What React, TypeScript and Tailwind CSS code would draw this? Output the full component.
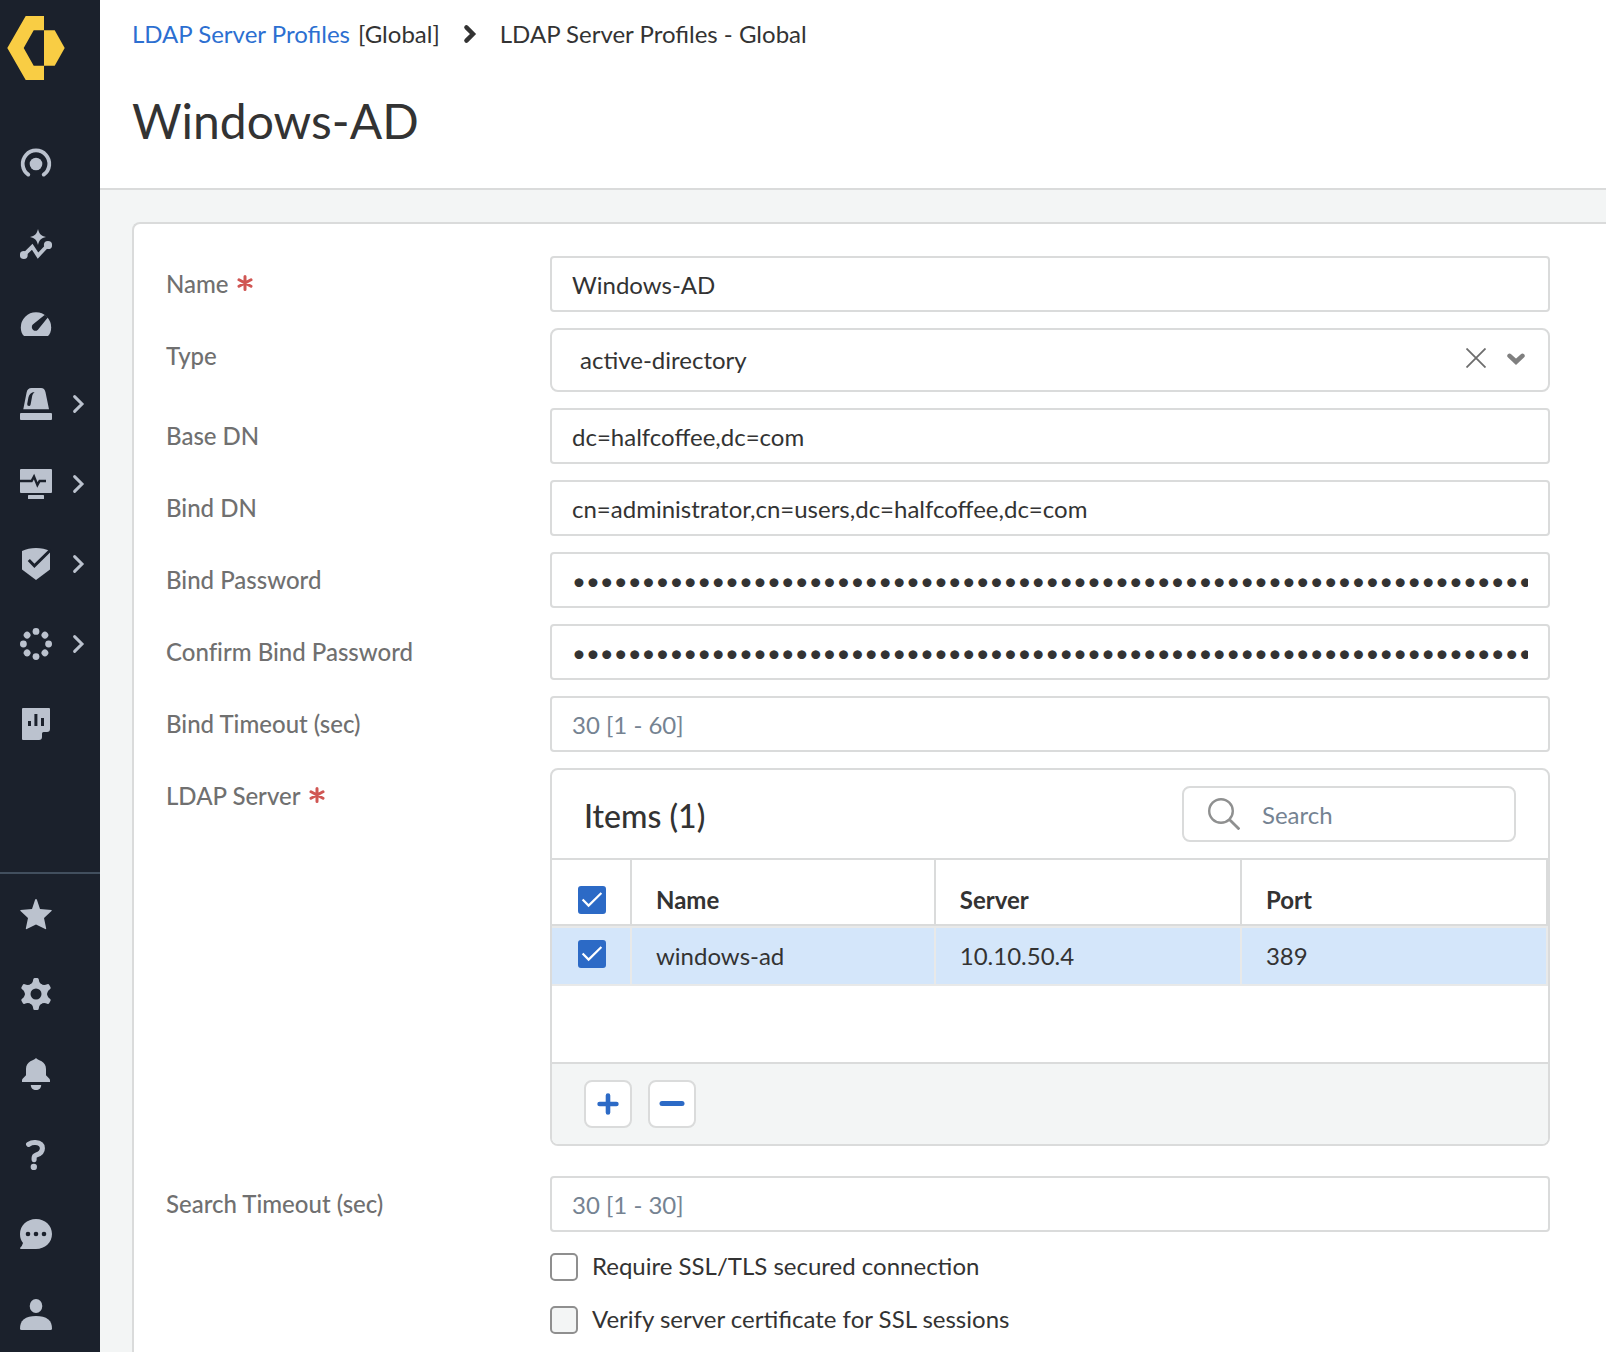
import React, { useState } from "react";
import type { ReactNode } from "react";

const DARK = "#1b212c";

function Glyph({ children }: { children: ReactNode }) {
  return (
    <svg viewBox="0 0 32 32" className="size-8 shrink-0" fill="currentColor" aria-hidden="true">
      {children}
    </svg>
  );
}

const RING = [0, 45, 90, 135, 180, 225, 270, 315];
const TEETH = [0, 60, 120, 180, 240, 300];

const topItems: { label: string; expandable?: boolean; icon: ReactNode }[] = [
  {
    label: "Command center",
    icon: (
      <>
        <circle cx="16" cy="16" r="6.3" />
        <path d="M8.3 26.6A13.3 13.3 0 1 1 23.7 26.6" fill="none" stroke="currentColor" strokeWidth="3.8" strokeLinecap="round" />
      </>
    ),
  },
  {
    label: "Insights",
    icon: (
      <>
        <path d="M18 1C19.3 6 21 7.7 26 9C21 10.3 19.3 12 18 17C16.7 12 15 10.3 10 9C15 7.7 16.7 6 18 1Z" />
        <circle cx="3.8" cy="27" r="3.9" />
        <circle cx="28" cy="17" r="4.1" />
        <path d="M3.8 27L12.2 18.8L18 27.6L28 17" fill="none" stroke="currentColor" strokeWidth="3.8" />
      </>
    ),
  },
  {
    label: "Dashboard",
    icon: (
      <>
        <path d="M4 28C2 26 .8 23 .8 19.4A15.2 15.2 0 0 1 31.2 19.4C31.2 23 30 26 28 28Z" />
        <path d="M12.8 16.6L24.6 7L27.8 9.4L18.9 20.6A3.7 3.7 0 1 1 12.8 16.6Z" fill={DARK} />
        <path d="M25.6 6.8L28.4 9.2" stroke={DARK} strokeWidth="1.4" />
      </>
    ),
  },
  {
    label: "Incidents",
    expandable: true,
    icon: (
      <>
        <path d="M3.3 21.3L6.6 4.5C7.1 1.7 8.8 0 11.5 0H21C23.4 0 25 1.5 25.5 4.2L29 21.3Z" />
        <path d="M14.6 4C11 4.4 9 6.5 8.4 9.5L7.2 16Q7 18 9 18Q10.3 18 10.6 16.5L12 9C12.4 6.5 13.3 5.3 14.6 4Z" fill={DARK} />
        <rect y="25" width="32" height="7" rx="1" />
      </>
    ),
  },
  {
    label: "Monitor",
    expandable: true,
    icon: (
      <>
        <rect y="1" width="32" height="24" rx="1" />
        <path d="M0 13H11.6L14 8.6L17.4 17L19.6 13H26" fill="none" stroke={DARK} strokeWidth="2.4" />
        <rect x="8" y="27" width="16" height="4" rx=".6" />
      </>
    ),
  },
  {
    label: "Security",
    expandable: true,
    icon: (
      <>
        <path d="M2 3C6 .9 11 0 16 0S26 .9 30 3V21.5L16 32L2 21.5Z" />
        <path d="M8.8 12L14.4 17.8L30.5 2" fill="none" stroke={DARK} strokeWidth="3" />
      </>
    ),
  },
  {
    label: "Workflows",
    expandable: true,
    icon: (
      <>
        {RING.map((a) => (
          <circle key={a} cx="16" cy="3.4" r="3.4" transform={`rotate(${a} 16 16)`} />
        ))}
      </>
    ),
  },
  {
    label: "Reports",
    icon: (
      <>
        <path d="M3 0H29Q30 0 30 1V21Q30 24 27 24H23.5Q22 24 22 25.5V29Q22 32 19 32H3Q2 32 2 31V1Q2 0 3 0Z" />
        <path d="M8 13H11V18H8ZM14.4 6H17.4V18H14.4ZM21 10H24V18H21Z" fill={DARK} />
      </>
    ),
  },
];

const bottomItems: { label: string; icon: ReactNode }[] = [
  {
    label: "Favorites",
    icon: <path d="M16 1Q16.7 1 17 2L20 11L31.5 12Q32 12.4 31.5 13L24 20L26.2 30.6Q26 31.4 25.2 31L16 26.6L6.8 31Q6 31.4 5.8 30.6L8 20L.5 13Q0 12.4 .5 12L12 11L15 2Q15.3 1 16 1Z" />,
  },
  {
    label: "Settings",
    icon: (
      <>
        <circle cx="16" cy="16" r="11" />
        {TEETH.map((a) => (
          <path key={a} d="M9.5 7.2Q13 5 13.2 1.5Q13.4 0 14.6 0H17.4Q18.6 0 18.8 1.5Q19 5 22.5 7.2L16 12Z" transform={`rotate(${a} 16 16)`} />
        ))}
        <circle cx="16" cy="16" r="5.5" fill={DARK} />
      </>
    ),
  },
  {
    label: "Notifications",
    icon: (
      <>
        <path d="M16 0C17.2 1.6 19.4 1.9 21.6 3.3C24.4 5 26 7.6 26 11V17.2L29.4 20.8Q30 21.4 30 22.4V24H2V22.4Q2 21.4 2.6 20.8L6 17.2V11C6 7.6 7.6 5 10.4 3.3C12.6 1.9 14.8 1.6 16 0Z" />
        <path d="M10.8 27H21.2C21.2 30 19 32 16 32S10.8 30 10.8 27Z" />
      </>
    ),
  },
  {
    label: "Help",
    icon: (
      <>
        <path d="M8.6 6.4C10.6 5 13 4.3 15.4 4.5C19.8 4.8 22.4 6.8 22.4 10.2C22.4 14 20.4 15.6 16.6 16.9C14.6 17.6 14.1 18.3 14.1 20V21.6" fill="none" stroke="currentColor" strokeWidth="5.1" strokeLinecap="round" />
        <circle cx="13.8" cy="29" r="3.2" />
      </>
    ),
  },
  {
    label: "Chat",
    icon: (
      <>
        <path d="M16 1C25 1 32 7.4 32 16S25 31 16 31H1Q0 31 0 30Q2.4 27.6 3 25Q0 21.4 0 16C0 7.4 7 1 16 1Z" />
        <circle cx="8" cy="16" r="2.3" fill={DARK} />
        <circle cx="16" cy="16" r="2.3" fill={DARK} />
        <circle cx="24" cy="16" r="2.3" fill={DARK} />
      </>
    ),
  },
  {
    label: "Account",
    icon: (
      <>
        <ellipse cx="16" cy="8" rx="6.3" ry="7" />
        <path d="M0 30.5C0 27 1 23.6 3.6 21.4C6.8 18.9 11 18 16 18S25.2 18.9 28.4 21.4C31 23.6 32 27 32 30.5Q32 32 30.5 32H1.5Q0 32 0 30.5Z" />
      </>
    ),
  },
];

function Sidebar() {
  return (
    <aside className="flex w-[100px] shrink-0 flex-col bg-[#1b212c] text-[#bbc2ce]">
      <a href="#home" aria-label="Home" className="mt-4 ml-[7px]">
        <svg viewBox="0 0 58 64" className="h-16 w-[58px]" fill="#f9cd44" aria-hidden="true">
          <path d="M18.7 0H37V14.3H26.7L16.7 32L26.7 49.7H37V64H18.7L.3 32Z" />
          <path d="M37 14.3H47.7L57.7 32L47.7 49.7H37Z" />
        </svg>
      </a>
      <nav aria-label="Main" className="mt-[68px] flex flex-col gap-12">
        {topItems.map((item) => (
          <button key={item.label} type="button" aria-label={item.label} className="flex items-center gap-5 pl-5">
            <Glyph>{item.icon}</Glyph>
            {item.expandable && (
              <svg viewBox="0 0 14 20" className="h-5 w-3.5" fill="none" stroke="currentColor" strokeWidth="3" strokeLinecap="round" aria-hidden="true">
                <path d="M2.6 2.6L10 10L2.6 17.4" />
              </svg>
            )}
          </button>
        ))}
      </nav>
      <nav aria-label="Utilities" className="mt-auto flex flex-col gap-12 border-t-2 border-[#424f5e] pt-6 pb-[22px]">
        {bottomItems.map((item) => (
          <button key={item.label} type="button" aria-label={item.label} className="flex items-center pl-5">
            <Glyph>{item.icon}</Glyph>
          </button>
        ))}
      </nav>
    </aside>
  );
}

const inputClass =
  "h-14 w-full rounded-[4px] border-2 border-[#dadbdb] bg-white px-5 text-[#333333] outline-none placeholder:text-[#758392] placeholder:opacity-100 focus:border-[#2c6ac6]";

function Row({ id, label, required, children }: { id: string; label: string; required?: boolean; children: ReactNode }) {
  return (
    <div className="grid grid-cols-[384px_minmax(0,1fr)] items-start">
      <label htmlFor={id} className="flex items-center gap-2 pt-3 leading-8 font-medium text-[#707070] [font-variant-ligatures:none]">
        {label}
        {required && (
          <svg viewBox="0 0 16 16" className="mb-0.5 size-4" stroke="#d05653" strokeWidth="3" strokeLinecap="round" aria-label="required">
            <path d="M8 1.5V14.5M2 4.8L14 11.2M14 4.8L2 11.2" />
          </svg>
        )}
      </label>
      {children}
    </div>
  );
}

function Check({ id, label, checked, onChange, disabled }: { id?: string; label?: string; checked: boolean; onChange: () => void; disabled?: boolean }) {
  return (
    <span className="grid size-7 shrink-0">
      <input
        id={id}
        type="checkbox"
        aria-label={label}
        checked={checked}
        onChange={onChange}
        disabled={disabled}
        className="col-start-1 row-start-1 size-7 appearance-none rounded-[5px] border-2 border-[#8f8f8f] bg-white checked:rounded-[3px] checked:border-[#2c6ac6] checked:bg-[#2c6ac6] disabled:bg-[#f3f5f5]"
      />
      {checked && (
        <svg viewBox="0 0 28 28" className="pointer-events-none col-start-1 row-start-1 size-7" fill="none" stroke="white" strokeWidth="2.2" aria-hidden="true">
          <path d="M4.6 13.4L10.6 19.6L23.4 7" />
        </svg>
      )}
    </span>
  );
}

const servers = [{ name: "windows-ad", server: "10.10.50.4", port: 389 }];
const SECRET = "x".repeat(96);

function ServerTable() {
  const [selected, setSelected] = useState(true);
  const toggle = () => setSelected((s) => !s);
  return (
    <section id="servers" className="mb-[14px] overflow-hidden rounded-[8px] border-2 border-[#dadbdb] bg-white">
      <div className="flex items-center justify-between border-b-2 border-[#dadbdb] px-8 py-4">
        <h2 className="pt-1 text-[32px] leading-10 font-medium">Items (1)</h2>
        <div className="flex h-14 w-[334px] items-center gap-[22px] rounded-[8px] border-2 border-[#dadbdb] pl-6">
          <svg viewBox="0 0 32 32" className="size-8 shrink-0" fill="none" stroke="#8f9090" strokeWidth="2.4" aria-hidden="true">
            <circle cx="13" cy="13" r="11.8" />
            <path d="M21.4 21.4L31.4 31.4" strokeWidth="2.8" />
          </svg>
          <input type="search" aria-label="Search items" placeholder="Search" className="min-w-0 flex-1 pt-0.5 outline-none placeholder:text-[#758392] placeholder:opacity-100" />
        </div>
      </div>
      <div className="min-h-[202px]">
        <table className="w-full table-fixed border-separate border-spacing-0 text-left">
          <colgroup>
            <col className="w-20" />
            <col className="w-[30.5%]" />
            <col />
            <col />
          </colgroup>
          <thead>
            <tr className="h-[66px]">
              <th className="border-r-2 border-b-2 border-[#dadbdb] pt-4 pl-[26px] font-normal">
                <Check label="Select all" checked={selected} onChange={toggle} />
              </th>
              {["Name", "Server", "Port"].map((h) => (
                <th key={h} scope="col" className="border-r-2 border-b-2 border-[#dadbdb] pt-4 pl-6 font-bold">
                  {h}
                </th>
              ))}
            </tr>
          </thead>
          <tbody>
            {servers.map((s) => (
              <tr key={s.name} className="h-[60px] bg-[#d4e6fa]">
                <td className="border-y-2 border-r-2 border-[#e8e9e9] pb-1 pl-[26px]">
                  <Check label={`Select ${s.name}`} checked={selected} onChange={toggle} />
                </td>
                {[s.name, s.server, s.port].map((v) => (
                  <td key={v} className="border-y-2 border-r-2 border-[#e8e9e9] pl-6">
                    {v}
                  </td>
                ))}
              </tr>
            ))}
          </tbody>
        </table>
      </div>
      <div className="flex gap-4 border-t-2 border-[#dadbdb] bg-[#f3f5f5] px-8 py-4">
        <button type="button" aria-label="Add" className="flex size-12 items-center justify-center rounded-[8px] border-2 border-[#dadbdb] bg-white">
          <svg viewBox="0 0 26 26" className="size-[26px]" stroke="#2c6ac6" strokeWidth="4.6" strokeLinecap="round" aria-hidden="true">
            <path d="M13 4.6V21.4M4.6 13H21.4" />
          </svg>
        </button>
        <button type="button" aria-label="Remove" className="flex size-12 items-center justify-center rounded-[8px] border-2 border-[#dadbdb] bg-white">
          <svg viewBox="0 0 26 26" className="size-[26px]" stroke="#2c6ac6" strokeWidth="5" strokeLinecap="round" aria-hidden="true">
            <path d="M3 12.5H23" />
          </svg>
        </button>
      </div>
    </section>
  );
}

function TypeSelect() {
  const [type, setType] = useState("active-directory");
  return (
    <div className="relative">
      <select
        id="type"
        value={type}
        onChange={(e) => setType(e.target.value)}
        className="h-16 w-full appearance-none rounded-[8px] border-2 border-[#dadbdb] bg-white pr-28 pl-7 text-[#333333] outline-none"
      >
        <option value="" />
        <option>active-directory</option>
        <option>e-directory</option>
        <option>sun</option>
        <option>other</option>
      </select>
      <div className="pointer-events-none absolute inset-y-0 right-6 flex items-center gap-5 pb-1">
        <button type="button" aria-label="Clear type" onClick={() => setType("")} className="pointer-events-auto">
          <svg viewBox="0 0 20 20" className="size-5" stroke="#6d6d6d" strokeWidth="1.8" aria-hidden="true">
            <path d="M.5 .5L19.5 19.5M19.5 .5L.5 19.5" />
          </svg>
        </button>
        <svg viewBox="0 0 20 12" className="mt-0.5 h-3 w-5" fill="none" stroke="#7f7f7f" strokeWidth="4.6" strokeLinecap="round" aria-hidden="true">
          <path d="M3.6 2.9L10 8.8L16.4 2.9" />
        </svg>
      </div>
    </div>
  );
}

export default function App() {
  const [ssl, setSsl] = useState(false);
  const [verify, setVerify] = useState(false);
  return (
    <div className="flex min-h-screen bg-[#f3f5f5] font-['Lato',sans-serif] text-[24px] leading-8 text-[#333333]">
      <Sidebar />
      <main className="flex min-w-0 flex-1 flex-col">
        <header className="border-b-2 border-[#dadbdb] bg-white pt-[18px] pb-[38px] pl-8">
          <nav aria-label="Breadcrumb" className="flex items-center">
            <a href="#profiles" className="text-[#2c6fd1]">
              LDAP Server Profiles
            </a>
            <span className="ml-2">[Global]</span>
            <svg viewBox="0 0 14 20" className="mx-[23px] h-5 w-3.5" fill="none" stroke="currentColor" strokeWidth="4.4" strokeLinecap="round" aria-hidden="true">
              <path d="M3.4 3.4L10 10L3.4 16.6" />
            </svg>
            <span>LDAP Server Profiles - Global</span>
          </nav>
          <h1 className="mt-[42px] text-[48px] leading-[58px]">Windows-AD</h1>
        </header>
        <form className="mt-8 ml-8 flex flex-1 flex-col gap-4 rounded-tl-[8px] border-t-2 border-l-2 border-[#dadbdb] bg-white pt-8 pr-14 pl-8" onSubmit={(e) => e.preventDefault()}>
          <Row id="name" label="Name" required>
            <input id="name" type="text" defaultValue="Windows-AD" className={inputClass} />
          </Row>
          <Row id="type" label="Type">
            <TypeSelect />
          </Row>
          <Row id="base-dn" label="Base DN">
            <input id="base-dn" type="text" defaultValue="dc=halfcoffee,dc=com" className={inputClass} />
          </Row>
          <Row id="bind-dn" label="Bind DN">
            <input id="bind-dn" type="text" defaultValue="cn=administrator,cn=users,dc=halfcoffee,dc=com" className={inputClass} />
          </Row>
          <Row id="bind-password" label="Bind Password">
            <input id="bind-password" type="password" defaultValue={SECRET} className={inputClass} />
          </Row>
          <Row id="confirm-password" label="Confirm Bind Password">
            <input id="confirm-password" type="password" defaultValue={SECRET} className={inputClass} />
          </Row>
          <Row id="bind-timeout" label="Bind Timeout (sec)">
            <input id="bind-timeout" type="text" placeholder="30 [1 - 60]" className={inputClass} />
          </Row>
          <Row id="servers" label="LDAP Server" required>
            <ServerTable />
          </Row>
          <Row id="search-timeout" label="Search Timeout (sec)">
            <input id="search-timeout" type="text" placeholder="30 [1 - 30]" className={inputClass} />
          </Row>
          <div className="mt-[5px] ml-[384px] flex flex-col gap-[25px]">
            <div className="flex h-7 items-center gap-3.5">
              <Check id="ssl" checked={ssl} onChange={() => setSsl(!ssl)} />
              <label htmlFor="ssl" className="pb-0.5">
                Require SSL/TLS secured connection
              </label>
            </div>
            <div className="flex h-7 items-center gap-3.5">
              <Check id="verify" checked={verify} onChange={() => setVerify(!verify)} disabled />
              <label htmlFor="verify" className="pb-0.5">
                Verify server certificate for SSL sessions
              </label>
            </div>
          </div>
        </form>
      </main>
    </div>
  );
}
